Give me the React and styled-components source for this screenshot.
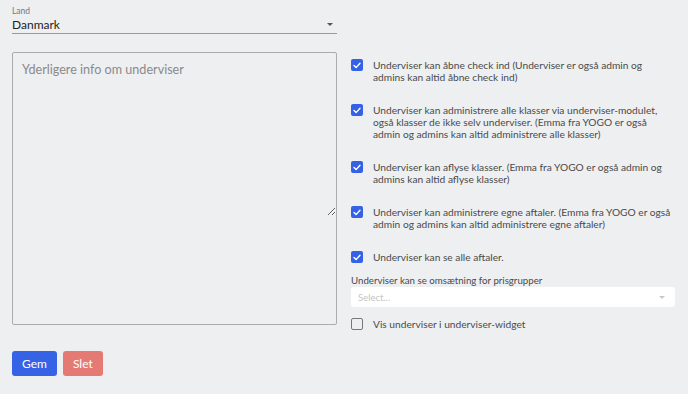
import React from "react";
import styled, { createGlobalStyle } from "styled-components";

const Global = createGlobalStyle`
  html, body { margin: 0; padding: 0; background: #eeeff1; }
  body { font-family: Lato, "Open Sans", sans-serif; color: #333; }
  * { box-sizing: border-box; }
`;

const Page = styled.div`
  padding: 6px 13px 0 12px;
  width: 688px;
  height: 394px;
`;

const Field = styled.div`
  width: 325px;
  display: flex;
  flex-direction: column;
`;

const SmallLabel = styled.div`
  font-size: 8.5px;
  line-height: 10px;
  color: #777;
`;

const SelectLine = styled.div`
  display: flex;
  align-items: center;
  justify-content: space-between;
  height: 18px;
  border-bottom: 1px solid #9a9a9a;
  font-size: 12px;
  color: #222;
  padding-right: 4px;
`;

const Caret = styled.span`
  width: 0;
  height: 0;
  border-left: ${(p) => p.$s || 4}px solid transparent;
  border-right: ${(p) => p.$s || 4}px solid transparent;
  border-top: ${(p) => p.$s || 4}px solid ${(p) => p.$c || "#555"};
`;

const Grid = styled.div`
  margin-top: 18px;
  display: grid;
  grid-template-columns: 325px 324px;
  column-gap: 14px;
  align-items: start;
`;

const InfoBox = styled.div`
  height: 273px;
  border: 1px solid #acacac;
  border-radius: 2px;
`;

const InfoArea = styled.textarea`
  display: block;
  width: 100%;
  height: 163px;
  border: none;
  background: transparent;
  padding: 9px 9px;
  font-family: inherit;
  font-size: 12.6px;
  color: #333;
  outline: none;
  resize: vertical;
  &::placeholder { color: #8a8a8a; }
`;

const Options = styled.div`
  padding-top: 7px;
  display: flex;
  flex-direction: column;
`;

const CheckRow = styled.label`
  display: flex;
  align-items: flex-start;
  gap: 10px;
  font-size: 10.2px;
  line-height: 12px;
  color: #4a4a4a;
  margin-bottom: ${(p) => p.$mb ?? 21}px;
`;

const Box = styled.span`
  flex: none;
  width: 12px;
  height: 12px;
  border-radius: 2px;
  display: flex;
  align-items: center;
  justify-content: center;
  background: ${(p) => (p.$on ? "#3561e7" : "transparent")};
  border: ${(p) => (p.$on ? "none" : "1.5px solid #777")};
`;

const CheckText = styled.span``;

const GroupLabel = styled.div`
  font-size: 9.7px;
  line-height: 12px;
  color: #4a4a4a;
  margin-bottom: 1px;
`;

const SelectBox = styled.div`
  height: 20px;
  background: #fff;
  border-radius: 3px;
  display: flex;
  align-items: center;
  justify-content: space-between;
  padding: 0 10px 0 7px;
  font-size: 9.5px;
  color: #c4c4c4;
  margin-bottom: 11px;
`;

const Buttons = styled.div`
  margin-top: 21px;
  display: flex;
  gap: 6px;
`;

const Button = styled.button`
  height: 25px;
  padding: 0 ${(p) => p.$px || 10}px;
  border: none;
  border-radius: 3px;
  background: ${(p) => p.$bg};
  color: #fff;
  font-family: inherit;
  font-size: 12px;
  font-weight: 400;
`;

const Check = () => (
  <svg width="8" height="7" viewBox="0 0 8 7">
    <path d="M1 3.6 L3.1 5.6 L7 1.3" fill="none" stroke="#fff" strokeWidth="1.4" strokeLinecap="round" strokeLinejoin="round" />
  </svg>
);

const items = [
  "Underviser kan åbne check ind (Underviser er også admin og admins kan altid åbne check ind)",
  "Underviser kan administrere alle klasser via underviser-modulet, også klasser de ikke selv underviser. (Emma fra YOGO er også admin og admins kan altid administrere alle klasser)",
  "Underviser kan aflyse klasser. (Emma fra YOGO er også admin og admins kan altid aflyse klasser)",
  "Underviser kan administrere egne aftaler. (Emma fra YOGO er også admin og admins kan altid administrere egne aftaler)",
  "Underviser kan se alle aftaler.",
];

export default function App() {
  return (
    <>
      <Global />
      <Page>
        <Field>
          <SmallLabel>Land</SmallLabel>
          <SelectLine>
            Danmark
            <Caret $s={3.5} />
          </SelectLine>
        </Field>
        <Grid>
          <InfoBox>
            <InfoArea placeholder="Yderligere info om underviser" />
          </InfoBox>
          <Options>
            {items.map((t, i) => (
              <CheckRow key={i} $mb={i === items.length - 1 ? 11 : 21}>
                <Box $on>
                  <Check />
                </Box>
                <CheckText>{t}</CheckText>
              </CheckRow>
            ))}
            <GroupLabel>Underviser kan se omsætning for prisgrupper</GroupLabel>
            <SelectBox>
              Select...
              <Caret $s={3.5} $c="#c8c8c8" />
            </SelectBox>
            <CheckRow $mb={0}>
              <Box />
              <CheckText>Vis underviser i underviser-widget</CheckText>
            </CheckRow>
          </Options>
        </Grid>
        <Buttons>
          <Button $bg="#3662e6" $px={10}>Gem</Button>
          <Button $bg="#e57a75" $px={10}>Slet</Button>
        </Buttons>
      </Page>
    </>
  );
}
